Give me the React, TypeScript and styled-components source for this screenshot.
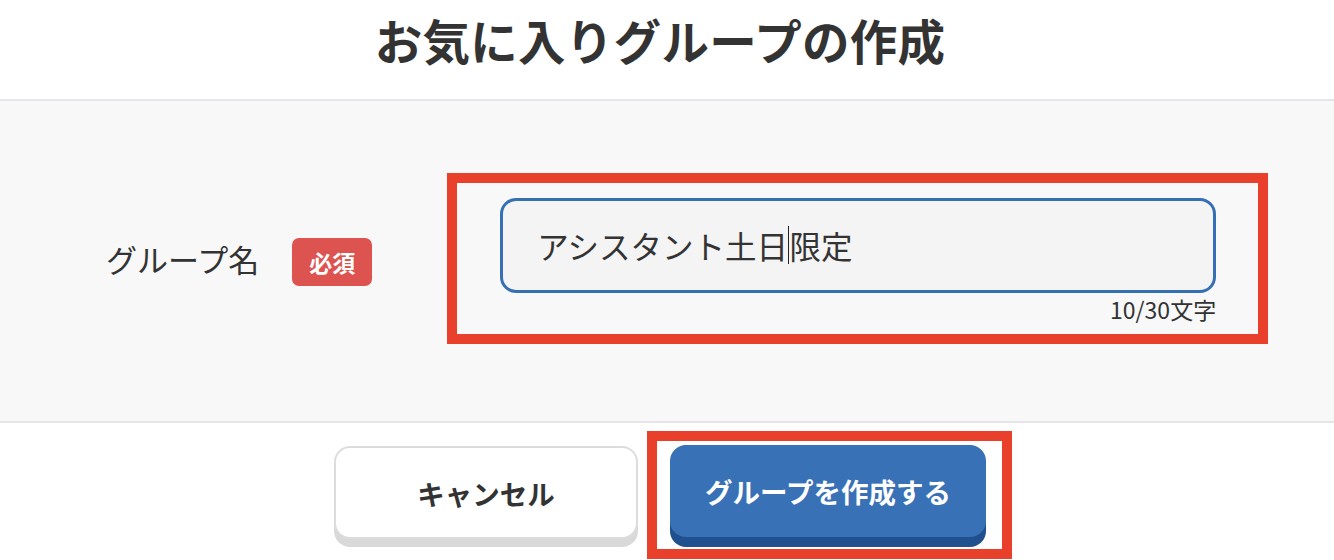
import React from "react";
import styled, { createGlobalStyle } from "styled-components";

const Global = createGlobalStyle`
  html, body { margin: 0; padding: 0; background: #ffffff; }
  body { font-family: "Noto Sans CJK JP", "Noto Sans", sans-serif; color: #333333; }
  * { box-sizing: border-box; }
`;

const Page = styled.div`
  width: 1334px;
  height: 560px;
  overflow: hidden;
  display: flex;
  flex-direction: column;
`;

const Header = styled.header`
  height: 101px;
  border-bottom: 2px solid #e6e5ea;
  display: flex;
  justify-content: center;
  padding-top: 16px;
  padding-right: 14px;
`;

const Title = styled.h1`
  margin: 0;
  font-size: 47.5px;
  line-height: 48px;
  font-weight: 700;
  letter-spacing: 0.3px;
  color: #333333;
`;

const FormSection = styled.section`
  height: 322px;
  background: #f8f8f8;
  border-bottom: 2px solid #e6e5ea;
  display: flex;
  align-items: center;
  padding: 0 0 6px 106px;
`;

const Label = styled.span`
  font-size: 31px;
  line-height: 40px;
  color: #333333;
  margin-top: 2px;
`;

const Badge = styled.span`
  margin-left: 33px;
  margin-top: 7px;
  width: 80px;
  height: 48px;
  border-radius: 7px;
  background: #dd5350;
  color: #ffffff;
  font-size: 23px;
  font-weight: 700;
  display: flex;
  align-items: center;
  justify-content: center;
`;

const Highlight = styled.div<{ $fill: string }>`
  border: 10px solid #e8402a;
  background: ${(p) => p.$fill};
`;

const FieldBox = styled(Highlight)`
  margin-left: 75px;
  width: 821px;
  padding: 15px 42px 11px 43px;
`;

const InputBox = styled.div`
  width: 716px;
  height: 95px;
  border: 3px solid #3570b5;
  border-radius: 16px;
  background: #f4f4f4;
  display: flex;
  align-items: center;
  padding-left: 34px;
  font-size: 31.5px;
  color: #333333;
  white-space: nowrap;
`;

const Caret = styled.span`
  display: inline-block;
  width: 1.5px;
  height: 38px;
  background: #222222;
  vertical-align: middle;
`;

const Counter = styled.div`
  margin-top: 2px;
  text-align: right;
  font-size: 23px;
  line-height: 28px;
  color: #333333;
`;

const Footer = styled.footer`
  flex: 1;
  display: flex;
  justify-content: center;
  align-items: flex-start;
  padding: 8px 0 0 12px;
`;

const Button = styled.button<{ $primary?: boolean }>`
  font-family: "Noto Sans CJK JP", "Noto Sans", sans-serif;
  font-size: 27.5px;
  font-weight: 700;
  border-radius: 16px;
  cursor: pointer;
  display: flex;
  align-items: center;
  justify-content: center;
  padding: 0;
  color: ${(p) => (p.$primary ? "#ffffff" : "#333333")};
  background: ${(p) => (p.$primary ? "#3871b5" : "#ffffff")};
  border: ${(p) => (p.$primary ? "none" : "2px solid #dcdcdc")};
  box-shadow: 0 ${(p) => (p.$primary ? "10px 0 #21508f" : "8px 0 #d9d9d9")};
`;

const CancelButton = styled(Button)`
  margin-top: 15px;
  width: 304px;
  height: 93px;
`;

const SubmitButton = styled(Button)`
  width: 316px;
  height: 92px;
`;

const SubmitBox = styled(Highlight)`
  margin-left: 9px;
  width: 365px;
  height: 128px;
  padding: 4px 16px 0 13px;
`;

export default function App() {
  return (
    <Page>
      <Global />
      <Header>
        <Title>お気に入りグループの作成</Title>
      </Header>
      <FormSection>
        <Label>グループ名</Label>
        <Badge>必須</Badge>
        <FieldBox $fill="#f8f8f8">
          <InputBox>
            アシスタント土日
            <Caret />
            限定
          </InputBox>
          <Counter>10/30文字</Counter>
        </FieldBox>
      </FormSection>
      <Footer>
        <CancelButton>キャンセル</CancelButton>
        <SubmitBox $fill="#ffffff">
          <SubmitButton $primary>グループを作成する</SubmitButton>
        </SubmitBox>
      </Footer>
    </Page>
  );
}
